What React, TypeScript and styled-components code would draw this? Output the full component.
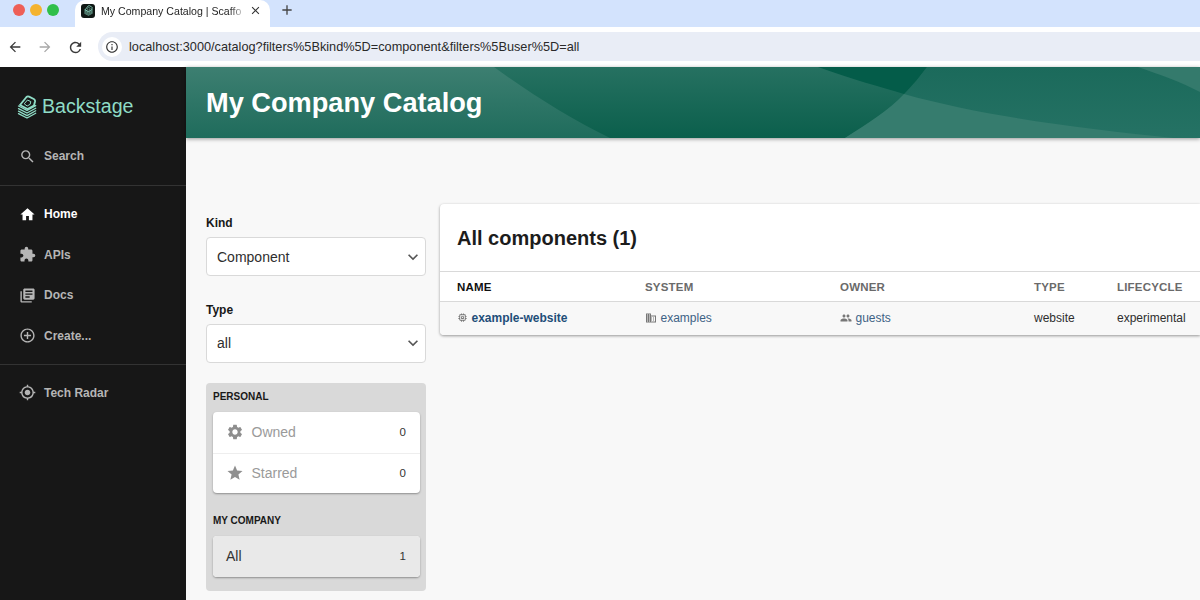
import React from "react";
import styled, { createGlobalStyle } from "styled-components";
import {
  MdArrowBack,
  MdArrowForward,
  MdRefresh,
  MdInfoOutline,
  MdSearch,
  MdHome,
  MdExtension,
  MdLibraryBooks,
  MdAddCircleOutline,
  MdMyLocation,
  MdSettings,
  MdStar,
  MdPeople,
  MdDomain,
  MdMemory,
  MdExpandMore,
  MdClose,
  MdAdd,
} from "react-icons/md";

const Global = createGlobalStyle`
  html, body { margin: 0; padding: 0; width: 1200px; height: 600px; overflow: hidden; background: #f8f8f8; }
  * { box-sizing: border-box; }
  body { font-family: "Liberation Sans", Arial, sans-serif; color: #181818; }
`;

const Page = styled.div`
  width: 1200px;
  height: 600px;
  display: flex;
  flex-direction: column;
  overflow: hidden;
`;

const TabStrip = styled.div`
  height: 27px;
  flex: none;
  background: #d3e3fd;
  display: flex;
  align-items: center;
  padding-left: 13px;
`;

const Lights = styled.div`
  display: flex;
  gap: 5px;
  width: 62px;
  flex: none;
  margin-top: -7px;
`;

const Light = styled.span<{ $c: string }>`
  width: 12px;
  height: 12px;
  border-radius: 50%;
  background: ${(p) => p.$c};
`;

const Tab = styled.div`
  width: 195px;
  height: 27px;
  background: #fff;
  border-radius: 10px 10px 0 0;
  display: flex;
  align-items: center;
  padding-left: 6px;
  font-size: 10.6px;
  color: #1f1f1f;
  margin-right: 9px;
`;

const Favicon = styled.span`
  width: 14px;
  height: 14px;
  border-radius: 3px;
  background: #0f1714;
  display: flex;
  align-items: center;
  justify-content: center;
  margin-right: 6px;
  flex: none;
  margin-top: -6px;
`;

const TabTitle = styled.span`
  width: 143px;
  white-space: nowrap;
  flex: none;
  margin-top: -6px;
  -webkit-mask-image: linear-gradient(90deg, #000 90%, rgba(0, 0, 0, 0.15) 100%);
  mask-image: linear-gradient(90deg, #000 90%, rgba(0, 0, 0, 0.15) 100%);
`;

const TabClose = styled.span`
  display: flex;
  margin-left: 5px;
  margin-top: -6px;
  color: #333;
`;

const NewTab = styled.span`
  display: flex;
  color: #444;
  margin-top: -7px;
`;

const Toolbar = styled.div`
  height: 40px;
  flex: none;
  background: #fff;
  display: flex;
  align-items: center;
  padding: 0 0 0 7px;
  gap: 14px;
`;

const NavIcon = styled.span<{ $dim?: boolean }>`
  display: flex;
  color: ${(p) => (p.$dim ? "#a8a8a8" : "#3a3a3a")};
`;

const UrlBar = styled.div`
  flex: 1;
  height: 29px;
  background: #e9edf6;
  border-radius: 15px 0 0 15px;
  display: flex;
  align-items: center;
  padding-left: 4px;
  margin-top: -1px;
  font-size: 12.73px;
  color: #2a2a2a;
`;

const UrlInfo = styled.span`
  width: 20px;
  height: 20px;
  border-radius: 50%;
  background: #fff;
  display: flex;
  align-items: center;
  justify-content: center;
  margin-right: 7px;
  color: #333;
`;

const Body = styled.div`
  flex: 1;
  display: flex;
  min-height: 0;
`;

const Sidebar = styled.nav`
  width: 186px;
  flex: none;
  background: #171717;
  display: flex;
  flex-direction: column;
`;

const Logo = styled.div`
  height: 69px;
  display: flex;
  align-items: center;
  gap: 5px;
  padding: 10px 0 0 17px;
  color: #8fdcc6;
  font-size: 19.6px;
`;

const NavGroup = styled.div<{ $pad: string }>`
  padding: ${(p) => p.$pad};
  display: flex;
  flex-direction: column;
`;

const Divider = styled.div`
  height: 1px;
  background: #333;
`;

const NavItem = styled.div<{ $active?: boolean }>`
  height: 40.5px;
  display: flex;
  align-items: center;
  gap: 8px;
  padding-left: 19px;
  font-size: 12px;
  font-weight: 700;
  color: ${(p) => (p.$active ? "#fff" : "#b5b5b5")};
`;

const Main = styled.main`
  flex: 1;
  min-width: 0;
  display: flex;
  flex-direction: column;
`;

const Header = styled.header`
  position: relative;
  height: 71px;
  flex: none;
  box-shadow: 0 1px 4px rgba(0, 0, 0, 0.4);
  display: flex;
  align-items: center;
  padding: 0 0 0 20px;
  overflow: hidden;
`;

const Waves = styled.svg`
  position: absolute;
  inset: 0;
  width: 100%;
  height: 100%;
`;

const Title = styled.h1`
  position: relative;
  margin: 0;
  font-size: 27.2px;
  font-weight: 700;
  color: #fff;
`;

const Content = styled.div`
  flex: 1;
  display: flex;
  gap: 14px;
  padding: 66px 0 0 20px;
  min-height: 0;
`;

const Filters = styled.aside`
  width: 220px;
  flex: none;
  display: flex;
  flex-direction: column;
`;

const FieldLabel = styled.div`
  font-size: 12px;
  font-weight: 700;
  line-height: 14px;
  margin: 12px 0 7px;
  color: #181818;
`;

const SelectBox = styled.div`
  height: 39px;
  background: #fff;
  border: 1px solid #d9d9d9;
  border-radius: 4px;
  display: flex;
  align-items: center;
  justify-content: space-between;
  padding: 0 2px 0 10px;
  font-size: 14px;
  color: #2e2e2e;
  margin-bottom: 14.5px;
`;

const Chevron = styled.span`
  display: flex;
  color: #555;
`;

const PickerPanel = styled.div`
  background: #d9d9d9;
  border-radius: 4px;
  padding: 7px 6px 14px 7px;
  margin-top: 6px;
`;

const GroupLabel = styled.div`
  font-size: 10px;
  font-weight: 700;
  line-height: 14px;
  margin: 0 0 8px;
  color: #181818;
`;

const PickerCard = styled.div`
  background: #fff;
  border-radius: 4px;
  box-shadow: 0 1px 2px rgba(0, 0, 0, 0.35);
  margin-bottom: 21px;
  &:last-child {
    margin-bottom: 0;
  }
`;

const PickerRow = styled.div<{ $muted?: boolean; $selected?: boolean }>`
  height: 40.5px;
  display: flex;
  align-items: center;
  padding: 0 14px 0 13px;
  font-size: 14px;
  color: ${(p) => (p.$muted ? "#9a9a9a" : "#333")};
  background: ${(p) => (p.$selected ? "#e9e9e9" : "transparent")};
  border-radius: ${(p) => (p.$selected ? "4px" : "0")};
  & + & {
    border-top: 1px solid #eee;
  }
`;

const PickerIcon = styled.span`
  display: flex;
  color: #8e8e8e;
  margin-right: 7.5px;
`;

const PickerName = styled.span`
  flex: 1;
`;

const PickerCount = styled.span`
  font-size: 11.5px;
  color: #333;
`;

const Card = styled.section`
  flex: 1;
  align-self: flex-start;
  background: #fff;
  box-shadow: 0 1px 3px rgba(0, 0, 0, 0.4);
  border-radius: 4px 0 0 4px;
`;

const CardTitle = styled.h2`
  margin: 0;
  height: 67px;
  display: flex;
  align-items: center;
  padding: 2px 0 0 17px;
  font-size: 20px;
  font-weight: 700;
  color: #1c1c1c;
`;

const Grid = styled.div`
  display: grid;
  grid-template-columns: 188px 195px 194px 83px 1fr;
  padding-left: 17px;
`;

const HeadRow = styled(Grid)`
  height: 31px;
  align-items: center;
  border-top: 1px solid #d9d9d9;
  border-bottom: 1px solid #d9d9d9;
`;

const HeadCell = styled.span<{ $strong?: boolean }>`
  font-size: 11.5px;
  font-weight: 700;
  letter-spacing: 0.2px;
  color: ${(p) => (p.$strong ? "#111" : "#6a6a6a")};
`;

const DataRow = styled(Grid)`
  height: 33px;
  padding-bottom: 2px;
  align-items: center;
  background: #f8f8f8;
  border-radius: 0 0 0 4px;
`;

const Cell = styled.span`
  display: flex;
  align-items: center;
  gap: 3.5px;
  font-size: 12px;
  color: #2e2e2e;
`;

const CellIcon = styled.span`
  display: flex;
  color: #777;
`;

const EntityLink = styled.span<{ $bold?: boolean }>`
  color: ${(p) => (p.$bold ? "#1f4e79" : "#3d6285")};
  font-weight: ${(p) => (p.$bold ? 700 : 400)};
`;

function BackstageMark({ size, color }: { size: number; color: string }) {
  return (
    <svg width={size} height={size * 1.2} viewBox="0 0 20 24" fill="none" stroke={color} strokeLinejoin="round" strokeLinecap="round">
      <path d="M3 10 L9.5 2 Q10.5 1 12 1.6 L16.8 4 Q18.3 4.9 18 6.5 L17 10.5 L10.5 14 Z" strokeWidth="1.9" />
      <path d="M7.5 8.5 L10.5 5 L13.8 6.6 L13.2 9.3 L10.5 10.8 Z" strokeWidth="1" />
      <path d="M1.5 11 L10 15.4 L18.7 10.6" strokeWidth="1.3" />
      <path d="M1.5 13.6 L10 18 L18.7 13.2" strokeWidth="1.3" />
      <path d="M1.5 16.2 L10 20.6 L18.7 15.8" strokeWidth="1.3" />
      <path d="M1.5 18.6 L10 23 L18.7 18.2" strokeWidth="1.3" />
    </svg>
  );
}

export default function App() {
  return (
    <Page>
      <Global />
      <TabStrip>
        <Lights>
          <Light $c="#ee5f57" />
          <Light $c="#f4b32f" />
          <Light $c="#30bf4a" />
        </Lights>
        <Tab>
          <Favicon>
            <BackstageMark size={9} color="#8fdcc6" />
          </Favicon>
          <TabTitle>My Company Catalog | Scaffo</TabTitle>
          <TabClose>
            <MdClose size={13} />
          </TabClose>
        </Tab>
        <NewTab>
          <MdAdd size={16} />
        </NewTab>
      </TabStrip>
      <Toolbar>
        <NavIcon>
          <MdArrowBack size={16} />
        </NavIcon>
        <NavIcon $dim>
          <MdArrowForward size={16} />
        </NavIcon>
        <NavIcon>
          <MdRefresh size={17} />
        </NavIcon>
        <UrlBar>
          <UrlInfo>
            <MdInfoOutline size={14} />
          </UrlInfo>
          localhost:3000/catalog?filters%5Bkind%5D=component&amp;filters%5Buser%5D=all
        </UrlBar>
      </Toolbar>
      <Body>
        <Sidebar>
          <Logo>
            <BackstageMark size={20} color="#8fdcc6" />
            Backstage
          </Logo>
          <NavGroup $pad="0 0 8px">
            <NavItem>
              <MdSearch size={17} />
              Search
            </NavItem>
          </NavGroup>
          <Divider />
          <NavGroup $pad="8.5px 0 7.5px">
            <NavItem $active>
              <MdHome size={17} />
              Home
            </NavItem>
            <NavItem>
              <MdExtension size={17} />
              APIs
            </NavItem>
            <NavItem>
              <MdLibraryBooks size={17} />
              Docs
            </NavItem>
            <NavItem>
              <MdAddCircleOutline size={17} />
              Create...
            </NavItem>
          </NavGroup>
          <Divider />
          <NavGroup $pad="8px 0">
            <NavItem>
              <MdMyLocation size={17} />
              Tech Radar
            </NavItem>
          </NavGroup>
        </Sidebar>
        <Main>
          <Header>
            <Waves viewBox="0 0 1014 71" preserveAspectRatio="none">
              <defs>
                <linearGradient id="base" x1="0" y1="0" x2="0" y2="1">
                  <stop offset="0" stopColor="#267161" />
                  <stop offset="1" stopColor="#0b5f4c" />
                </linearGradient>
                <linearGradient id="left" x1="0" y1="0" x2="0" y2="1">
                  <stop offset="0" stopColor="#3d7f71" />
                  <stop offset="1" stopColor="#1f6c5c" />
                </linearGradient>
                <linearGradient id="right" x1="0" y1="0" x2="0" y2="1">
                  <stop offset="0" stopColor="#1b6a5b" />
                  <stop offset="1" stopColor="#257264" />
                </linearGradient>
              </defs>
              <rect width="1014" height="71" fill="url(#base)" />
              <path d="M0 0 H308 C345 27 385 52 424 71 H0 Z" fill="url(#left)" />
              <path d="M741 0 C720 30 695 50 659 71 H1014 V0 Z" fill="url(#right)" />
              <path d="M718 27 C800 50 900 62 988 71 H659 C682 56 702 44 718 27 Z" fill="#367c6e" />
              <path d="M632 0 C665 12 695 20 718 27 C727 18 735 8 741 0 Z" fill="#045c49" />
              <path d="M952 0 C975 8 995 15 1014 25 V0 Z" fill="#347a6c" />
            </Waves>
            <Title>My Company Catalog</Title>
          </Header>
          <Content>
            <Filters>
              <FieldLabel>Kind</FieldLabel>
              <SelectBox>
                Component
                <Chevron>
                  <MdExpandMore size={20} />
                </Chevron>
              </SelectBox>
              <FieldLabel>Type</FieldLabel>
              <SelectBox>
                all
                <Chevron>
                  <MdExpandMore size={20} />
                </Chevron>
              </SelectBox>
              <PickerPanel>
                <GroupLabel>PERSONAL</GroupLabel>
                <PickerCard>
                  <PickerRow $muted>
                    <PickerIcon>
                      <MdSettings size={18} />
                    </PickerIcon>
                    <PickerName>Owned</PickerName>
                    <PickerCount>0</PickerCount>
                  </PickerRow>
                  <PickerRow $muted>
                    <PickerIcon>
                      <MdStar size={18} />
                    </PickerIcon>
                    <PickerName>Starred</PickerName>
                    <PickerCount>0</PickerCount>
                  </PickerRow>
                </PickerCard>
                <GroupLabel>MY COMPANY</GroupLabel>
                <PickerCard>
                  <PickerRow $selected>
                    <PickerName>All</PickerName>
                    <PickerCount>1</PickerCount>
                  </PickerRow>
                </PickerCard>
              </PickerPanel>
            </Filters>
            <Card>
              <CardTitle>All components (1)</CardTitle>
              <HeadRow>
                <HeadCell $strong>NAME</HeadCell>
                <HeadCell>SYSTEM</HeadCell>
                <HeadCell>OWNER</HeadCell>
                <HeadCell>TYPE</HeadCell>
                <HeadCell>LIFECYCLE</HeadCell>
              </HeadRow>
              <DataRow>
                <Cell>
                  <CellIcon>
                    <MdMemory size={11} />
                  </CellIcon>
                  <EntityLink $bold>example-website</EntityLink>
                </Cell>
                <Cell>
                  <CellIcon>
                    <MdDomain size={12} />
                  </CellIcon>
                  <EntityLink>examples</EntityLink>
                </Cell>
                <Cell>
                  <CellIcon>
                    <MdPeople size={12} />
                  </CellIcon>
                  <EntityLink>guests</EntityLink>
                </Cell>
                <Cell>website</Cell>
                <Cell>experimental</Cell>
              </DataRow>
            </Card>
          </Content>
        </Main>
      </Body>
    </Page>
  );
}
